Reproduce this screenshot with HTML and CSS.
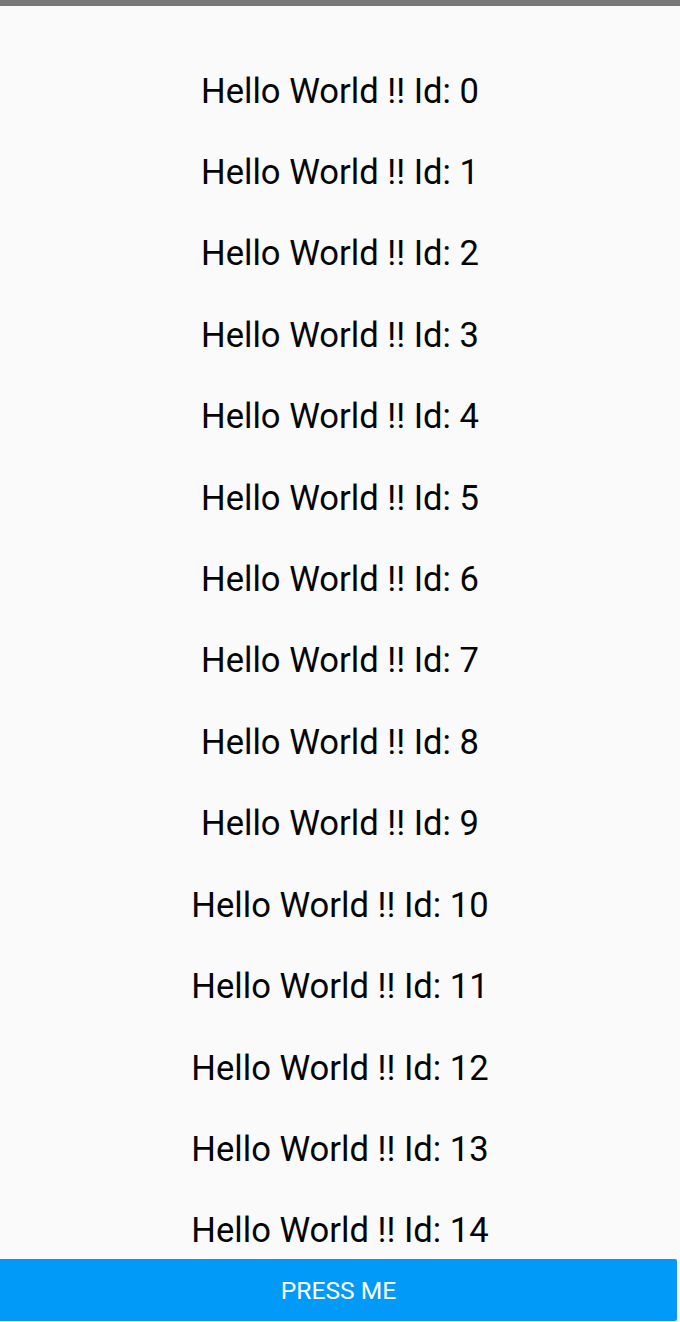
FILE: index.html
```html
<!DOCTYPE html>
<html lang="en">
<head>
    <meta charset="UTF-8">
    <meta name="viewport" content="width=device-width, initial-scale=1.0">
    <title>Hello World List</title>
    <link rel="stylesheet" href="styles.css">
</head>
<body>

<div class="status-bar"></div>

<div class="screen">
    <ul class="list">
        <li>Hello World !! Id: 0</li>
        <li>Hello World !! Id: 1</li>
        <li>Hello World !! Id: 2</li>
        <li>Hello World !! Id: 3</li>
        <li>Hello World !! Id: 4</li>
        <li>Hello World !! Id: 5</li>
        <li>Hello World !! Id: 6</li>
        <li>Hello World !! Id: 7</li>
        <li>Hello World !! Id: 8</li>
        <li>Hello World !! Id: 9</li>
        <li>Hello World !! Id: 10</li>
        <li>Hello World !! Id: 11</li>
        <li>Hello World !! Id: 12</li>
        <li>Hello World !! Id: 13</li>
        <li>Hello World !! Id: 14</li>
    </ul>

    <button class="press-btn" type="button">Press me</button>
</div>

</body>
</html>
```

FILE: styles.css
```css
body {
    margin: 0;
    font-family: Roboto, "Noto Sans", sans-serif;
    background: #fafafa;
    height: 1322px;
    overflow: hidden;
}
.status-bar {
    height: 6px;
    background: #777777;
}
.screen {
    display: flex;
    flex-direction: column;
    height: 1316px;
}
.list {
    flex: 1;
    list-style: none;
    margin: 0;
    padding: 44.5px 0 0;
    overflow: hidden;
}
.list li {
    height: 81.43px;
    line-height: 81.43px;
    text-align: center;
    font-size: 34.6px;
    color: #050505;
}
.press-btn {
    height: 62px;
    margin: 0 3px 1px 0;
    border: none;
    border-radius: 0 2px 2px 0;
    background: #029af8;
    color: white;
    font-family: Roboto, sans-serif;
    font-size: 24.6px;
    text-transform: uppercase;
}
```
